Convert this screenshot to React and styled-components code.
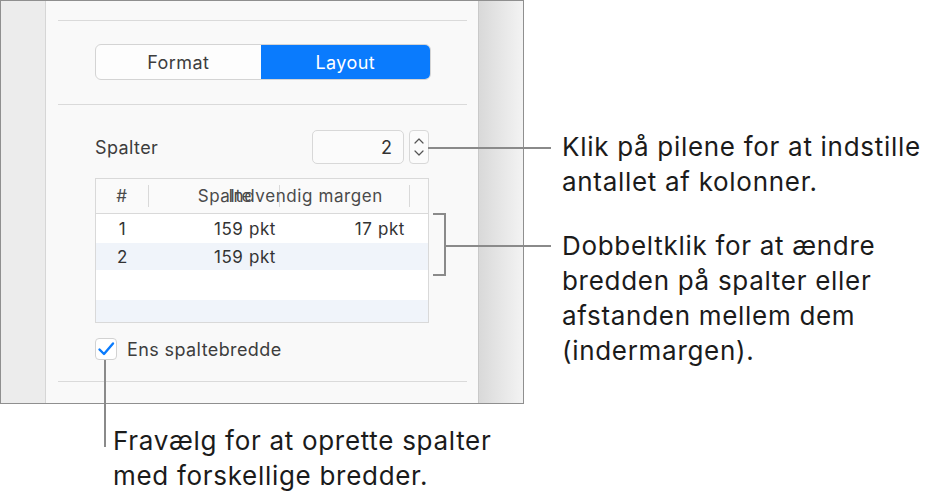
import React from "react";
import styled, { createGlobalStyle } from "styled-components";

const Global = createGlobalStyle`
  html, body { margin: 0; padding: 0; background: #ffffff; }
  body { font-family: Inter, "Noto Sans", sans-serif; -webkit-font-smoothing: antialiased; }
`;

const Stage = styled.div`
  position: relative;
  width: 939px;
  height: 503px;
  display: grid;
  grid-template-columns: 524px 1fr;
  grid-template-rows: 404px 1fr;
  overflow: hidden;
`;

const Panel = styled.div`
  box-sizing: border-box;
  border: 1px solid #8f8f8f;
  display: flex;
  background: #f9f9f9;
`;

const LeftStrip = styled.div`
  width: 44px;
  background: #ececec;
  border-right: 1px solid #d6d6d6;
`;

const Main = styled.div`
  flex: 1;
  padding: 0 11px 0 12px;
  display: flex;
  flex-direction: column;
`;

const Scroller = styled.div`
  width: 44px;
  border-left: 1px solid #c9c9c9;
  background: linear-gradient(to right, #d9d9d9, #f3f3f3);
`;

const Rule = styled.div`
  height: 1px;
  background: #dadada;
  margin-top: ${(p) => p.$top}px;
`;

const Section = styled.div`
  padding: 0 36px 0 37px;
  display: flex;
  flex-direction: column;
`;

const Segmented = styled.div`
  margin-top: 23px;
  height: 36px;
  display: flex;
  box-sizing: border-box;
  border-radius: 6px;
  overflow: hidden;
  border: 1px solid #d4d4d4;
  background: #fdfdfd;
`;

const Segment = styled.div`
  flex: ${(p) => p.$grow};
  display: flex;
  align-items: center;
  justify-content: center;
  font-size: 18px;
  letter-spacing: 0.4px;
  color: ${(p) => (p.$active ? "#ffffff" : "#3d3d3d")};
  background: ${(p) => (p.$active ? "#0a7bfd" : "transparent")};
`;

const ColumnsRow = styled.div`
  margin-top: 25px;
  margin-right: 2px;
  display: flex;
  align-items: center;
  height: 34px;
`;

const Label = styled.div`
  flex: 1;
  font-size: 18px;
  letter-spacing: 0.4px;
  color: #3d3d3d;
`;

const NumberField = styled.div`
  box-sizing: border-box;
  width: 92px;
  height: 34px;
  border: 1px solid #d8d8d8;
  border-radius: 5px;
  background: #fbfbfb;
  font-size: 18px;
  color: #333;
  display: flex;
  align-items: center;
  justify-content: flex-end;
  padding-right: 11px;
`;

const Stepper = styled.div`
  box-sizing: border-box;
  margin-left: 5px;
  width: 20px;
  height: 34px;
  border: 1px solid #d8d8d8;
  border-radius: 4px;
  background: #fbfbfb;
  display: flex;
  flex-direction: column;
  align-items: center;
  justify-content: center;
  gap: 6px;
`;

const Table = styled.div`
  margin-top: 14px;
  margin-right: 2px;
  box-sizing: border-box;
  border: 1px solid #d9d9d9;
  background: #ffffff;
  display: flex;
  flex-direction: column;
`;

const gridCols = "53px 131px 130px 1fr";

const HeaderRow = styled.div`
  height: 34px;
  border-bottom: 1px solid #d9d9d9;
  background: #fafafa;
  display: grid;
  grid-template-columns: ${gridCols};
  align-items: center;
  font-size: 17px;
  letter-spacing: 0.6px;
  color: #4a4a4a;
`;

const HeadCell = styled.div`
  position: relative;
  height: 22px;
  display: flex;
  align-items: center;
  justify-content: ${(p) => p.$align || "center"};
  border-right: ${(p) => (p.$divider ? "1px solid #d9d9d9" : "none")};
  white-space: nowrap;
  padding-right: ${(p) => p.$pr || 0}px;
`;

const OverflowText = styled.span`
  position: absolute;
  right: 26px;
  top: 50%;
  transform: translateY(-50%);
  white-space: nowrap;
`;

const Row = styled.div`
  height: ${(p) => p.$h}px;
  background: ${(p) => (p.$alt ? "#f0f4fa" : "#ffffff")};
  display: grid;
  grid-template-columns: ${gridCols};
  align-items: center;
  font-size: 17px;
  letter-spacing: 0.6px;
  color: #333;
`;

const Cell = styled.div`
  display: flex;
  justify-content: ${(p) => p.$align || "center"};
  padding-right: ${(p) => p.$pr || 0}px;
  white-space: nowrap;
`;

const CheckRow = styled.div`
  margin-top: 15px;
  display: flex;
  align-items: center;
  gap: 10px;
  font-size: 18px;
  letter-spacing: 0.4px;
  color: #3d3d3d;
`;

const CheckBox = styled.div`
  box-sizing: border-box;
  width: 22px;
  height: 22px;
  border: 1px solid #d2d2d2;
  border-radius: 4px;
  background: #ffffff;
  display: flex;
  align-items: center;
  justify-content: center;
`;

const RightNotes = styled.div`
  padding-left: 38px;
  display: flex;
  flex-direction: column;
`;

const Note = styled.div`
  margin-top: ${(p) => p.$top}px;
  font-size: 26px;
  letter-spacing: 0.7px;
  line-height: 35px;
  color: #1b1b1b;
  white-space: pre-line;
`;

const BottomNote = styled.div`
  grid-column: 1 / 3;
  padding: 19px 0 0 113px;
  font-size: 26px;
  letter-spacing: 0.7px;
  line-height: 35px;
  color: #1b1b1b;
  white-space: pre-line;
`;

const Leader = styled.div`
  position: absolute;
  background: #8a8a8a;
  left: ${(p) => p.$x}px;
  top: ${(p) => p.$y}px;
  width: ${(p) => p.$w}px;
  height: ${(p) => p.$h}px;
`;

const Bracket = styled.div`
  position: absolute;
  left: 433px;
  top: 213px;
  width: 11px;
  height: 59px;
  border: 2px solid #8a8a8a;
  border-left: none;
`;

const Chevron = ({ up }) => (
  <svg width="10" height="6" viewBox="0 0 10 6">
    <path
      d={up ? "M1 5 L5 1 L9 5" : "M1 1 L5 5 L9 1"}
      fill="none"
      stroke="#555"
      strokeWidth="1.2"
      strokeLinecap="round"
      strokeLinejoin="round"
    />
  </svg>
);

export default function App() {
  return (
    <>
      <Global />
      <Stage>
        <Panel>
          <LeftStrip />
          <Main>
            <Rule $top={19} />
            <Section>
              <Segmented>
                <Segment $grow={165}>Format</Segment>
                <Segment $grow={170} $active>
                  Layout
                </Segment>
              </Segmented>
            </Section>
            <Rule $top={24} />
            <Section>
              <ColumnsRow>
                <Label>Spalter</Label>
                <NumberField>2</NumberField>
                <Stepper>
                  <Chevron up />
                  <Chevron />
                </Stepper>
              </ColumnsRow>
              <Table>
                <HeaderRow>
                  <HeadCell $divider>#</HeadCell>
                  <HeadCell $divider $align="flex-end" $pr={27}>
                    Spalte
                  </HeadCell>
                  <HeadCell $divider>
                    <OverflowText>Indvendig margen</OverflowText>
                  </HeadCell>
                  <HeadCell />
                </HeaderRow>
                <Row $h={29}>
                  <Cell>1</Cell>
                  <Cell $align="flex-end" $pr={4}>159 pkt</Cell>
                  <Cell $align="flex-end" $pr={5}>17 pkt</Cell>
                  <Cell />
                </Row>
                <Row $h={27} $alt>
                  <Cell>2</Cell>
                  <Cell $align="flex-end" $pr={4}>159 pkt</Cell>
                  <Cell />
                  <Cell />
                </Row>
                <Row $h={30} />
                <Row $h={22} $alt />
              </Table>
              <CheckRow>
                <CheckBox>
                  <svg width="18" height="16" viewBox="0 0 18 16">
                    <path
                      d="M2.5 8.5 L7 13 L16 2.5"
                      fill="none"
                      stroke="#0a7bfd"
                      strokeWidth="2.4"
                      strokeLinecap="round"
                      strokeLinejoin="round"
                    />
                  </svg>
                </CheckBox>
                Ens spaltebredde
              </CheckRow>
            </Section>
            <Rule $top={21} />
          </Main>
          <Scroller />
        </Panel>
        <RightNotes>
          <Note $top={129}>{"Klik på pilene for at indstille\nantallet af kolonner."}</Note>
          <Note $top={29}>
            {"Dobbeltklik for at ændre\nbredden på spalter eller\nafstanden mellem dem\n(indermargen)."}
          </Note>
        </RightNotes>
        <BottomNote>{"Fravælg for at oprette spalter\nmed forskellige bredder."}</BottomNote>
        <Leader $x={428} $y={147} $w={123} $h={2} />
        <Bracket />
        <Leader $x={444} $y={245} $w={107} $h={2} />
        <Leader $x={104} $y={360} $w={2} $h={87} />
      </Stage>
    </>
  );
}
